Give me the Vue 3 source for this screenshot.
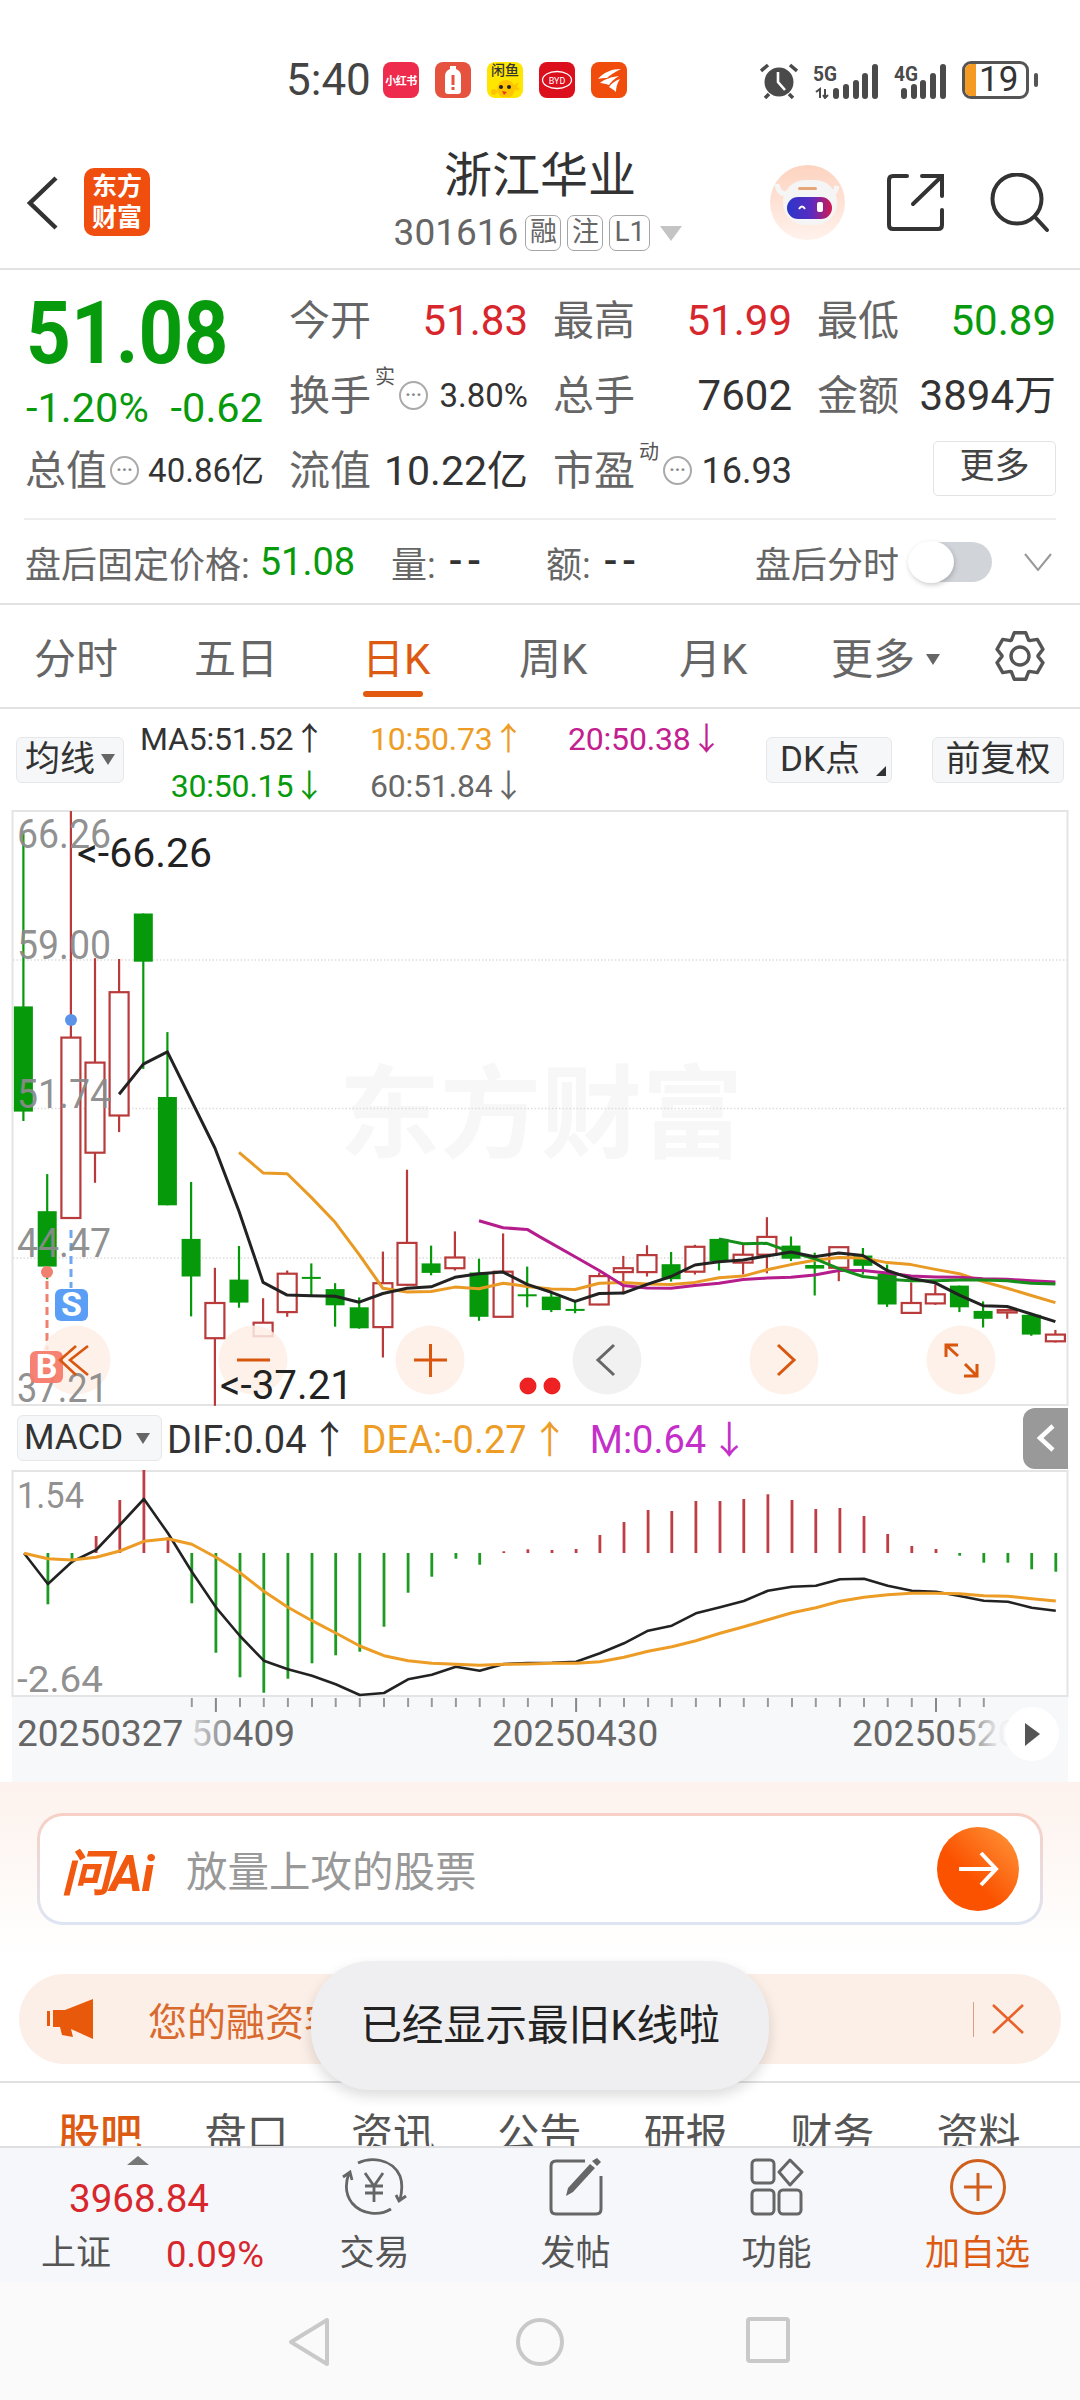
<template>
  <div class="page">
    <!-- status bar -->
    <div class="status">
      <span class="time">5:40</span>
      <div class="apps">
        <span class="app app-xhs">小红书</span>
        <span class="app app-bottle">
          <svg width="18" height="28" viewBox="0 0 18 28"><path d="M6 0H12V3Q17 5 17 10V25Q17 28 14 28H4Q1 28 1 25V10Q1 5 6 3Z" fill="#fff"/><rect x="7.5" y="9" width="3" height="10" fill="#e5533f"/><rect x="7.5" y="21" width="3" height="3" fill="#e5533f"/></svg>
        </span>
        <span class="app app-fish">
          <span class="fish-name">闲鱼</span>
          <svg width="32" height="19" viewBox="0 0 32 19"><circle cx="17" cy="11" r="9" fill="#ffc400"/><circle cx="5" cy="14" r="3" fill="#ffc400"/><circle cx="12" cy="9" r="2" fill="#222"/><circle cx="20" cy="9" r="2" fill="#222"/><path d="M13 13L18 14 15 17Z" fill="#e5381a"/><path d="M25 7L30 4 28 9 31 11 27 13Z" fill="#ffc400"/></svg>
        </span>
        <span class="app app-byd">
          <svg width="32" height="20" viewBox="0 0 32 20"><ellipse cx="16" cy="10" rx="14.5" ry="8.5" stroke="#fff" stroke-width="1.3" fill="none"/><text x="16" y="13.5" class="byd">BYD</text></svg>
        </span>
        <span class="app app-em">
          <svg width="28" height="28" viewBox="0 0 28 28"><path d="M3 13C9 6 17 3 26 3 20 6 15 9 12 12 9 12 6 12 3 13ZM5 17C10 13 16 11 24 10 19 13 16 16 14 19 11 18 8 17 5 17ZM14 21C17 17 20 15 25 13 22 17 21 22 21 26 19 24 16 22 14 21Z" fill="#fff"/></svg>
        </span>
      </div>
      <div class="sys">
        <svg width="38" height="36" viewBox="0 0 38 36">
          <circle cx="19" cy="19" r="14.5" fill="#4a4a4a"/>
          <path d="M18 9V19L25 27" stroke="#fff" stroke-width="2.6" fill="none"/>
          <path d="M1 8L8 2M37 8L30 2M9 31L5 35M29 31L33 35" stroke="#4a4a4a" stroke-width="3.5" fill="none"/>
        </svg>
        <svg width="66" height="36" viewBox="0 0 66 36">
          <text x="0" y="18" class="net" textLength="24" lengthAdjust="spacingAndGlyphs">5G</text>
          <path d="M7 35V26L3 29M12 26V35M10 32L12 35 15 32" stroke="#4a4a4a" stroke-width="2" fill="none"/>
          <path d="M23 28V33M33 24V33M43 20V33M52 13V33M62 4V33" stroke="#4a4a4a" stroke-width="6" stroke-linecap="round"/>
        </svg>
        <svg width="53" height="36" viewBox="0 0 53 36">
          <text x="0" y="18" class="net" textLength="24" lengthAdjust="spacingAndGlyphs">4G</text>
          <path d="M10 28V33M20 24V33M29 20V33M39 13V33M49 4V33" stroke="#4a4a4a" stroke-width="6" stroke-linecap="round"/>
        </svg>
        <div class="battery"><span class="batt-body"><i></i><b>19</b></span><span class="batt-tip"></span></div>
      </div>
    </div>

    <!-- title bar -->
    <div class="titlebar">
      <div class="tb-left">
        <svg width="31" height="54" viewBox="0 0 31 54"><path d="M29 2L3 27 29 52" stroke="#333" stroke-width="4.5" fill="none"/></svg>
        <div class="logo">东方<br>财富</div>
      </div>
      <div class="tb-center">
        <div class="name">浙江华业</div>
        <div class="code-row">
          <span class="code">301616</span>
          <span class="tag">融</span>
          <span class="tag">注</span>
          <span class="tag tag-l">L1</span>
          <span class="code-tri"></span>
        </div>
      </div>
      <div class="tb-right">
        <svg width="75" height="75" viewBox="0 0 75 75">
          <defs>
            <linearGradient id="visor" x1="0" y1="0" x2="1" y2="0"><stop offset="0" stop-color="#2a36c9"/><stop offset="0.55" stop-color="#5b2bc0"/><stop offset="1" stop-color="#d11a50"/></linearGradient>
            <linearGradient id="halo" x1="0" y1="0" x2="0" y2="1"><stop offset="0" stop-color="#fdd3c0"/><stop offset="1" stop-color="#fff2ec"/></linearGradient>
          </defs>
          <circle cx="37.5" cy="37.5" r="37.5" fill="url(#halo)"/>
          <path d="M7 19C8 26 11 29 16 29M67 21C66 27 63 30 58 30" stroke="#f6f6f6" stroke-width="5" fill="none"/>
          <rect x="13" y="15" width="54" height="45" rx="22" fill="#f5f5f6"/>
          <rect x="17" y="32" width="45" height="22" rx="11" fill="url(#visor)"/>
          <path d="M29 44Q32 39 35 44" stroke="#fff" stroke-width="2" fill="none"/>
          <rect x="47" y="37" width="6" height="10" rx="2" fill="#fff"/>
          <rect x="28" y="22" width="19" height="3" rx="1.5" fill="#e5a777"/>
        </svg>
        <svg class="share" width="60" height="60" viewBox="0 0 60 60">
          <path d="M21 3H7Q3 3 3 7V52Q3 56 7 56H52Q56 56 56 52V37" stroke="#333" stroke-width="4" fill="none" stroke-linecap="round"/>
          <path d="M27 31L55 4M36 3H56V23" stroke="#333" stroke-width="4" fill="none" stroke-linecap="round"/>
        </svg>
        <svg width="60" height="60" viewBox="0 0 60 60">
          <circle cx="27" cy="26" r="24.5" stroke="#333" stroke-width="4" fill="none"/>
          <path d="M45 44L57 57" stroke="#333" stroke-width="4" stroke-linecap="round"/>
        </svg>
      </div>
    </div>

    <!-- quote -->
    <div class="quote">
      <div class="price-block">
        <div class="price"><span>51.08</span></div>
        <div class="change"><span>-1.20%</span><span>-0.62</span></div>
      </div>
      <div class="cell"><span class="lab">今开</span><span class="val up">51.83</span></div>
      <div class="cell"><span class="lab">最高</span><span class="val up">51.99</span></div>
      <div class="cell"><span class="lab">最低</span><span class="val down">50.89</span></div>
      <div class="cell">
        <span class="lab-group"><span class="lab">换手</span><sup class="sup">实</sup><span class="dots">···</span></span>
        <span class="val v33">3.80%</span>
      </div>
      <div class="cell"><span class="lab">总手</span><span class="val">7602</span></div>
      <div class="cell"><span class="lab">金额</span><span class="val">3894万</span></div>
      <div class="cell">
        <span class="lab-group"><span class="lab">总值</span><span class="dots d-after">···</span></span>
        <span class="val v33">40.86亿</span>
      </div>
      <div class="cell"><span class="lab">流值</span><span class="val v41">10.22亿</span></div>
      <div class="cell">
        <span class="lab-group"><span class="lab">市盈</span><sup class="sup">动</sup><span class="dots">···</span></span>
        <span class="val v36">16.93</span>
      </div>
      <div class="cell cell-more"><span class="more-btn">更多</span></div>
    </div>

    <!-- after hours -->
    <div class="after">
      <div class="af-a"><span>盘后固定价格:</span><b class="down">51.08</b></div>
      <div class="af-b"><span>量:</span><b>--</b></div>
      <div class="af-c"><span>额:</span><b>--</b></div>
      <span class="af-label">盘后分时</span>
      <span class="toggle"><i></i></span>
      <svg width="28" height="18" viewBox="0 0 28 18"><path d="M1 1L14 17 27 1" stroke="#999" stroke-width="2" fill="none"/></svg>
    </div>

    <!-- period tabs -->
    <div class="periods">
      <span>分时</span>
      <span>五日</span>
      <span class="active">日K</span>
      <span>周K</span>
      <span>月K</span>
      <span class="more-tab">更多<i></i></span>
      <svg width="52" height="52" viewBox="0 0 52 52"><path :d="gear" stroke="#555" stroke-width="3.4" fill="none" stroke-linejoin="round"/><circle cx="26" cy="26" r="9" stroke="#555" stroke-width="3.4" fill="none"/></svg>
    </div>

    <!-- moving averages -->
    <div class="ma-row">
      <span class="chip chip-ma">均线<i></i></span>
      <div class="ma-grid">
        <span>MA5:51.52<em>↑</em></span>
        <span class="c-orange">10:50.73<em>↑</em></span>
        <span class="c-pink">20:50.38<em>↓</em></span>
        <span class="down">30:50.15<em>↓</em></span>
        <span class="c-gray">60:51.84<em>↓</em></span>
      </div>
      <span class="chip chip-dk">DK点<i></i></span>
      <span class="chip chip-fq">前复权</span>
    </div>

    <!-- k line chart -->
    <svg class="chart kline" width="1080" height="596" viewBox="0 810 1080 596">
      <rect x="12.5" y="811" width="1055" height="594" fill="#fff" stroke="#e4e4e4" stroke-width="2"/>
      <text x="339" y="1150" class="wm">东方财富</text>
      <line v-for="y in [960, 1108.5, 1258]" :key="y" x1="13" x2="1067" :y1="y" :y2="y" stroke="#ddd" stroke-width="1.5" stroke-dasharray="1.5 2"/>
      <g v-for="c in candles" :key="c.x">
        <line :x1="c.x" :x2="c.x" :y1="c.top" :y2="c.bottom" :stroke="c.color" stroke-width="2.2"/>
        <rect :x="c.x - 9.5" :y="c.y" width="19" :height="c.h" :fill="c.up ? '#fff' : c.color" :stroke="c.up ? c.color : 'none'" :stroke-width="c.up ? 2.2 : 0"/>
      </g>
      <polyline v-for="l in maLines" :key="l.color" :points="l.points" :stroke="l.color" stroke-width="3" fill="none" stroke-linejoin="round"/>

      <circle cx="71" cy="1020" r="6" fill="#5b93e8"/>
      <line x1="71" x2="71" y1="1230" y2="1288" stroke="#6ea6f0" stroke-width="3" stroke-dasharray="8 5"/>
      <rect x="55" y="1289" width="33" height="32" rx="6" fill="#5a9ff5"/>
      <text x="71.5" y="1316" class="badge-text">S</text>
      <circle cx="47" cy="1272" r="6" fill="#f08070"/>
      <line x1="47" x2="47" y1="1281" y2="1350" stroke="#f08070" stroke-width="3" stroke-dasharray="8 5"/>

      <circle v-for="b in roundBtns" :key="b.x" :cx="b.x" cy="1360" r="34.5" :fill="b.fill" fill-opacity="0.85"/>

      <text v-for="t in priceLabels" :key="t.text" x="17" :y="t.y" class="axis-label" :textLength="t.w" lengthAdjust="spacingAndGlyphs">{{ t.text }}</text>
      <text x="77" y="867" class="mark" textLength="135" lengthAdjust="spacingAndGlyphs">&lt;-66.26</text>
      <text x="220" y="1399" class="mark" textLength="133" lengthAdjust="spacingAndGlyphs">&lt;-37.21</text>

      <rect x="30" y="1351" width="33" height="32" rx="6" fill="#f77b6b" fill-opacity="0.95"/>
      <text x="46.5" y="1378" class="badge-text">B</text>
      <path d="M88 1346L70 1360 88 1375M76 1346L60 1360 76 1375" stroke="#d9560f" stroke-width="2.6" fill="none"/>
      <path d="M237 1360H270" stroke="#d9560f" stroke-width="3" fill="none"/>
      <path d="M414 1360H447M430.5 1344V1377" stroke="#d9560f" stroke-width="3" fill="none"/>
      <path d="M614 1345L598 1360 614 1375" stroke="#666" stroke-width="3" fill="none"/>
      <path d="M778 1345L794 1360 778 1375" stroke="#d9560f" stroke-width="3" fill="none"/>
      <path d="M946 1345L958 1356M946 1357V1345H958M977 1376L965 1364M977 1364V1376H964" stroke="#d9560f" stroke-width="3" fill="none"/>
      <circle cx="528" cy="1386" r="8.5" fill="#ee2222"/>
      <circle cx="552" cy="1386" r="8.5" fill="#ee2222"/>
    </svg>

    <!-- macd legend -->
    <div class="macd-row">
      <span class="chip chip-macd">MACD<i></i></span>
      <span class="macd-v">DIF:0.04<em>↑</em></span>
      <span class="macd-v mv-dea c-orange">DEA:-0.27<em>↑</em></span>
      <span class="macd-v c-violet">M:0.64<em>↓</em></span>
      <span class="side-btn">
        <svg width="20" height="30" viewBox="0 0 20 30"><path d="M17 3L4 15 17 27" stroke="#fff" stroke-width="4.5" fill="none"/></svg>
      </span>
    </div>

    <!-- macd chart and date axis -->
    <svg class="chart macd" width="1080" height="312" viewBox="0 1470 1080 312">
      <defs>
        <linearGradient id="fadeIn" gradientUnits="userSpaceOnUse" x1="188" x2="240" y1="0" y2="0"><stop offset="0" stop-color="#e4e4e6"/><stop offset="1" stop-color="#666"/></linearGradient>
        <linearGradient id="fadeOut" gradientUnits="userSpaceOnUse" x1="960" x2="1000" y1="0" y2="0"><stop offset="0" stop-color="#666"/><stop offset="1" stop-color="#f0f0f2"/></linearGradient>
      </defs>
      <rect x="12" y="1697" width="1056" height="85" fill="#f7f8fa"/>
      <rect x="12.5" y="1471" width="1055" height="225" fill="#fff" stroke="#e4e4e4" stroke-width="2"/>
      <line v-for="b in macdBars" :key="b.x" :x1="b.x" :x2="b.x" :y1="1553" :y2="b.y" :stroke="b.color" stroke-width="2.8"/>
      <polyline :points="difLine" stroke="#222" stroke-width="2.6" fill="none" stroke-linejoin="round"/>
      <polyline :points="deaLine" stroke="#ed9d25" stroke-width="3" fill="none" stroke-linejoin="round"/>
      <text x="17" y="1508" class="axis-label small" textLength="67" lengthAdjust="spacingAndGlyphs">1.54</text>
      <text x="17" y="1692" class="axis-label small" textLength="86" lengthAdjust="spacingAndGlyphs">-2.64</text>
      <line v-for="t in ticks" :key="t.x" :x1="t.x" :x2="t.x" y1="1698" :y2="t.long ? 1712 : 1707" :stroke="t.long ? '#888' : '#999'" stroke-width="2"/>
      <text x="17" y="1746" class="date">20250327</text>
      <text x="191" y="1746" class="date date-in">50409</text>
      <text x="492" y="1746" class="date">20250430</text>
      <text x="852" y="1746" class="date date-out">20250520</text>
      <circle cx="1032" cy="1734" r="27" fill="#fff"/>
      <path d="M1025 1723L1040 1734 1025 1746Z" fill="#555"/>
    </svg>

    <!-- ask ai -->
    <div class="ai-wrap">
      <div class="ai-box">
        <span class="ai-logo">问Ai</span>
        <span class="ai-hint">放量上攻的股票</span>
        <span class="ai-go">
          <svg width="42" height="42" viewBox="0 0 42 42"><path d="M2 21H38M24 5L39 21 24 37" stroke="#fff" stroke-width="4" fill="none"/></svg>
        </span>
      </div>
    </div>

    <!-- notice -->
    <div class="notice">
      <svg width="46" height="40" viewBox="0 0 46 40"><path d="M0 12H3V27H0ZM6 11H18L46 0V40L24 30 26 38 15 36 13 28H6Z" fill="#e8590c"/></svg>
      <span class="notice-text">您的融资客</span>
      <span class="notice-sep"></span>
      <svg width="32" height="30" viewBox="0 0 32 30"><path d="M1 1L31 29M31 1L1 29" stroke="#e8622a" stroke-width="2.6"/></svg>
    </div>

    <!-- info tabs, cut by the bottom bar -->
    <div class="info-tabs">
      <span class="on">股吧</span><span>盘口</span><span>资讯</span><span>公告</span><span>研报</span><span>财务</span><span>资料</span>
    </div>

    <!-- bottom bar -->
    <div class="bottom">
      <div class="index">
        <i class="idx-tri"></i>
        <div class="idx-value">3968.84</div>
        <div class="idx-line"><span>上证</span><b>0.09%</b></div>
      </div>
      <div class="act">
        <svg width="66" height="60" viewBox="0 0 66 60">
          <path d="M16 5C28 -1 50 0 58 18 61 26 60 34 58 42M54 37L57 43 64 38" stroke="#666" stroke-width="2.8" fill="none"/>
          <path d="M49 51C38 58 20 57 10 45 3 36 3 26 7 15M1 19L8 14 10 22" stroke="#666" stroke-width="2.8" fill="none"/>
          <path d="M23 15L32 28 41 15M32 28V44M23 28H41M23 35H41" stroke="#666" stroke-width="2.8" fill="none"/>
        </svg>
        <span>交易</span>
      </div>
      <div class="act">
        <svg width="56" height="60" viewBox="0 0 56 60">
          <path d="M37 3H8Q3 3 3 8V51Q3 56 8 56H48Q53 56 53 51V18" stroke="#666" stroke-width="3" fill="none"/>
          <path d="M18 38L20 30 42 6 47 10 25 34Z" fill="#666"/>
          <path d="M44 3L49 0 53 4 49 8Z" fill="#666"/>
        </svg>
        <span>发帖</span>
      </div>
      <div class="act">
        <svg width="54" height="60" viewBox="0 0 54 60">
          <rect x="2" y="2" width="22" height="23" rx="4" stroke="#666" stroke-width="3" fill="none"/>
          <path d="M40 2L52 14 40 27 29 14Z" stroke="#666" stroke-width="3" fill="none" stroke-linejoin="round"/>
          <rect x="2" y="32" width="22" height="24" rx="4" stroke="#666" stroke-width="3" fill="none"/>
          <rect x="29" y="32" width="22" height="24" rx="4" stroke="#666" stroke-width="3" fill="none"/>
        </svg>
        <span>功能</span>
      </div>
      <div class="act act-on">
        <svg width="56" height="60" viewBox="0 0 56 60">
          <circle cx="28" cy="29" r="26.5" stroke="#cf5f1c" stroke-width="3" fill="none"/>
          <path d="M14 29H42M28 15V43" stroke="#cf5f1c" stroke-width="3" fill="none"/>
        </svg>
        <span>加自选</span>
      </div>
    </div>

    <!-- system nav -->
    <div class="nav">
      <svg width="42" height="50" viewBox="0 0 42 50"><path d="M39 3V47L3 25Z" stroke="#c9c9c9" stroke-width="4" fill="none" stroke-linejoin="round"/></svg>
      <svg width="48" height="50" viewBox="0 0 48 50"><circle cx="24" cy="25" r="22" stroke="#c9c9c9" stroke-width="4" fill="none"/></svg>
      <svg width="44" height="46" viewBox="0 0 44 46"><rect x="2" y="2" width="40" height="42" rx="2" stroke="#c9c9c9" stroke-width="4" fill="none"/></svg>
    </div>

    <!-- toast -->
    <div class="toast">已经显示最旧K线啦</div>
  </div>
</template>

<script setup>
// coordinates below were read off crops, zx/zy are crop units
const X = (zx) => +(zx / 2.904).toFixed(1)
const Y = (zy) => +(zy / 2.529 + 800).toFixed(1)
const R = 1568 // right half crop starts here

const GREEN = '#069a0b'
const RED = '#b93a3a'

// x, wick top, wick bottom, body top, body bottom, up
const rawCandles = [
  [68, 85, 812, 522, 788, 0],
  [137, 946, 1212, 1040, 1180, 0],
  [206, 28, 600, 601, 1057, 1],
  [276, 400, 968, 664, 892, 1],
  [346, 402, 840, 486, 798, 1],
  [416, 287, 680, 287, 409, 0],
  [486, 587, 1025, 751, 1025, 0],
  [555, 966, 1306, 1110, 1205, 0],
  [624, 1183, 1532, 1272, 1361, 1],
  [694, 1128, 1284, 1213, 1271, 0],
  [764, 1260, 1358, 1322, 1356, 1],
  [834, 1190, 1307, 1198, 1295, 1],
  [904, 1172, 1255, 1206, 1211, 0],
  [973, 1222, 1332, 1237, 1278, 0],
  [1043, 1258, 1337, 1283, 1336, 0],
  [1112, 1142, 1410, 1222, 1333, 1],
  [1182, 935, 1228, 1120, 1226, 1],
  [1252, 1127, 1202, 1172, 1196, 0],
  [1321, 1091, 1190, 1157, 1184, 1],
  [1391, 1160, 1317, 1195, 1307, 0],
  [1461, 1096, 1308, 1193, 1307, 1],
  [1531, 1180, 1283, 1250, 1255, 0],
  [R + 33, 1245, 1295, 1256, 1290, 0],
  [R + 102, 1268, 1298, 1287, 1291, 0],
  [R + 172, 1195, 1278, 1204, 1276, 1],
  [R + 242, 1153, 1250, 1184, 1194, 1],
  [R + 311, 1126, 1205, 1151, 1194, 1],
  [R + 381, 1143, 1218, 1174, 1212, 0],
  [R + 450, 1125, 1200, 1130, 1193, 1],
  [R + 520, 1110, 1190, 1110, 1167, 0],
  [R + 590, 1125, 1200, 1150, 1170, 1],
  [R + 659, 1055, 1197, 1105, 1150, 1],
  [R + 729, 1104, 1166, 1127, 1160, 0],
  [R + 798, 1145, 1253, 1176, 1185, 0],
  [R + 868, 1130, 1217, 1131, 1183, 1],
  [R + 938, 1133, 1200, 1152, 1178, 0],
  [R + 1008, 1175, 1282, 1198, 1276, 0],
  [R + 1078, 1220, 1297, 1272, 1297, 1],
  [R + 1148, 1225, 1277, 1250, 1273, 1],
  [R + 1218, 1228, 1295, 1228, 1283, 0],
  [R + 1287, 1268, 1334, 1292, 1312, 0],
  [R + 1357, 1287, 1312, 1290, 1296, 1],
  [R + 1427, 1300, 1355, 1302, 1352, 0],
  [R + 1497, 1340, 1372, 1352, 1369, 1]
]

const candles = rawCandles.map(([x, t, b, bt, bb, up]) => ({
  x: X(x),
  top: Y(t),
  bottom: Y(b),
  y: Y(bt),
  h: Math.max(+(Y(bb) - Y(bt)).toFixed(1), 2),
  up: !!up,
  color: up ? RED : GREEN
}))

const toPoints = (list, fy) => list.map(([x, y]) => `${X(x)},${fy(y)}`).join(' ')

const maLines = [
  {
    color: '#e99a24',
    points: toPoints([[694,891],[764,943],[834,945],[904,1005],[973,1068],[1043,1150],[1112,1235],[1182,1244],[1252,1243],[1321,1232],[1391,1236],[1461,1222],[1531,1230],[R+33,1237],[R+102,1238],[R+172,1222],[R+242,1220],[R+311,1224],[R+381,1225],[R+450,1220],[R+520,1208],[R+590,1204],[R+659,1188],[R+729,1175],[R+798,1164],[R+868,1157],[R+938,1158],[R+1008,1170],[R+1078,1175],[R+1148,1187],[R+1218,1198],[R+1287,1218],[R+1357,1235],[R+1427,1253],[R+1497,1271]], Y)
  },
  {
    color: '#b51d8c',
    points: toPoints([[1391,1064],[1461,1082],[1531,1086],[R,1105],[R+102,1155],[R+172,1190],[R+242,1228],[R+311,1234],[R+381,1235],[R+450,1228],[R+520,1222],[R+590,1213],[R+659,1209],[R+729,1207],[R+798,1201],[R+868,1190],[R+938,1190],[R+1008,1196],[R+1078,1204],[R+1148,1206],[R+1218,1207],[R+1287,1211],[R+1357,1212],[R+1427,1216],[R+1497,1219]], Y)
  },
  {
    color: '#158f1a',
    points: toPoints([[R+520,1110],[R+590,1122],[R+659,1121],[R+729,1143],[R+798,1160],[R+868,1185],[R+938,1205],[R+1008,1212],[R+1078,1216],[R+1148,1216],[R+1218,1214],[R+1287,1214],[R+1357,1216],[R+1427,1222],[R+1497,1224]], Y)
  },
  {
    color: '#222',
    points: toPoints([[346,744],[416,668],[486,637],[624,880],[694,1040],[764,1220],[834,1252],[904,1254],[973,1255],[1043,1270],[1112,1248],[1182,1235],[1252,1231],[1321,1207],[1391,1198],[1461,1194],[1531,1225],[R+33,1245],[R+102,1268],[R+172,1248],[R+242,1247],[R+311,1225],[R+381,1205],[R+450,1176],[R+520,1168],[R+590,1163],[R+659,1153],[R+729,1143],[R+798,1155],[R+868,1146],[R+938,1152],[R+1008,1190],[R+1078,1210],[R+1148,1221],[R+1218,1252],[R+1287,1279],[R+1357,1281],[R+1427,1300],[R+1497,1319]], Y)
  }
]

const priceLabels = [
  { text: '66.26', y: 848, w: 94 },
  { text: '59.00', y: 959, w: 94 },
  { text: '51.74', y: 1108, w: 94 },
  { text: '44.47', y: 1257, w: 94 },
  { text: '37.21', y: 1402, w: 91 }
]

const roundBtns = [
  { x: 76, fill: '#fdeee5' },
  { x: 253, fill: '#fdeee5' },
  { x: 430, fill: '#fdeee5' },
  { x: 607, fill: '#efefef' },
  { x: 784, fill: '#fdeee5' },
  { x: 961, fill: '#fdeee5' }
]

// macd crops are 3x on the vertical axis
const MY = (zy) => +(zy / 3 + 1400).toFixed(1)

const rawBars = [
  [139,613],[209,490],[279,408],[348,300],[418,210],[488,412],[557,610],[627,758],[697,832],[766,878],[836,836],[906,790],[975,766],[1045,755],[1115,680],[1185,578],[1254,530],[1324,476],[1393,494],[1463,454],[1533,448],
  [R+35,450],[R+105,447],[R+174,405],[R+244,366],[R+314,330],[R+383,333],[R+453,303],[R+523,303],[R+592,297],[R+662,283],[R+732,300],[R+801,327],[R+871,324],[R+941,348],[R+1010,402],[R+1080,438],[R+1150,447],[R+1219,467],[R+1289,488],[R+1359,488],[R+1428,508],[R+1498,515]
]

const macdBars = rawBars.map(([x, y]) => ({
  x: X(x),
  y: MY(y),
  color: y > 460 ? '#1d9a22' : '#bf3e45'
}))

const difLine = toPoints([[70,460],[139,552],[209,485],[279,450],[348,375],[418,297],[488,400],[557,515],[627,622],[697,708],[766,782],[836,808],[906,827],[975,853],[1045,885],[1115,879],[1185,838],[1254,824],[1324,800],[1393,812],[1463,792],[1533,789],[R+35,788],[R+105,785],[R+174,760],[R+244,730],[R+314,692],[R+383,677],[R+453,640],[R+523,622],[R+592,603],[R+662,572],[R+732,560],[R+801,557],[R+871,538],[R+941,536],[R+1010,557],[R+1080,572],[R+1150,575],[R+1219,588],[R+1289,602],[R+1359,605],[R+1428,623],[R+1498,632]], MY)

const deaLine = toPoints([[70,460],[139,476],[209,480],[279,472],[348,453],[418,424],[488,416],[557,433],[627,472],[697,518],[766,574],[836,622],[906,662],[975,699],[1045,738],[1115,767],[1185,782],[1254,790],[1324,793],[1393,796],[1463,793],[1533,792],[R+35,790],[R+105,790],[R+174,785],[R+244,772],[R+314,754],[R+383,740],[R+453,722],[R+523,700],[R+592,680],[R+662,659],[R+732,638],[R+801,623],[R+871,604],[R+941,592],[R+1010,584],[R+1080,580],[R+1150,580],[R+1219,581],[R+1289,587],[R+1359,589],[R+1428,596],[R+1498,603]], MY)

const ticks = rawBars
  .filter(([x]) => x >= 557 && x <= R + 1289)
  .map(([x]) => ({ x: X(x), long: x === 627 || x === R + 105 || x === R + 1150 }))

// six toothed gear outline
const gearOutline = () => {
  const pts = []
  for (let i = 0; i < 6; i++) {
    const a = (i * Math.PI) / 3 - Math.PI / 2
    for (const [da, r] of [[-0.5, 18], [-0.24, 24], [0.24, 24], [0.5, 18]]) {
      pts.push(`${(26 + r * Math.cos(a + da)).toFixed(1)} ${(26 + r * Math.sin(a + da)).toFixed(1)}`)
    }
  }
  return `M${pts.join('L')}Z`
}
const gear = gearOutline()
</script>

<style>
body { background: #fff; }
</style>

<style scoped>
.page {
  width: 1080px;
  height: 2400px;
  overflow: hidden;
  position: relative;
  background: #fff;
  color: #333;
  font-family: Roboto, "Noto Sans CJK SC", sans-serif;
}
.up { color: #d7262c; }
.down { color: #079a0c; }
.c-orange { color: #ed9d25; }
.c-pink { color: #c2208f; }
.c-gray { color: #666; }
.c-violet { color: #c42fc9; }

/* status */
.status {
  height: 130px;
  display: flex;
  align-items: flex-start;
  padding: 62px 42px 0 286px;
  box-sizing: border-box;
}
.time { font-size: 44px; line-height: 36px; color: #444; width: 82px; }
.apps { display: flex; gap: 16px; margin-left: 15px; }
.app {
  width: 36px;
  height: 36px;
  border-radius: 8px;
  display: flex;
  align-items: center;
  justify-content: center;
  color: #fff;
  overflow: hidden;
}
.app-xhs { background: #ee2b4c; font-size: 11px; font-weight: 700; white-space: nowrap; letter-spacing: -0.5px; }
.app-bottle { background: #e5533f; }
.app-fish { background: #ffe600; color: #333; flex-direction: column; justify-content: flex-start; }
.fish-name { font-size: 14px; line-height: 16px; font-weight: 500; white-space: nowrap; }
.app-byd { background: #dc0f1c; }
.byd { font-size: 9px; fill: #fff; text-anchor: middle; }
.app-em { background: #f04c0c; }
.sys { display: flex; align-items: center; margin-left: auto; }
.sys svg:nth-child(2) { margin-left: 15px; }
.sys svg:nth-child(3) { margin-left: 15px; }
.net { font-size: 21px; font-weight: 700; fill: #4a4a4a; }
.battery { display: flex; align-items: center; margin-left: 15px; margin-top: -1px; }
.batt-body {
  width: 67px;
  height: 38px;
  border: 3px solid #555;
  border-radius: 9px;
  box-sizing: border-box;
  display: flex;
  align-items: center;
}
.batt-body i { width: 11px; height: 100%; background: #f59a23; display: block; border-radius: 6px 0 0 6px; }
.batt-body b { font-weight: 400; font-size: 35px; color: #333; margin-left: 3px; line-height: 32px; }
.batt-tip { width: 4px; height: 14px; background: #555; margin-left: 5px; border-radius: 2px; }

/* title */
.titlebar {
  height: 140px;
  display: grid;
  grid-template-columns: 1fr auto 1fr;
  border-bottom: 2px solid #e2e2e2;
  box-sizing: border-box;
}
.tb-left { display: flex; align-items: flex-start; padding: 46px 0 0 27px; }
.tb-left svg { flex: none; }
.logo {
  width: 66px;
  height: 68px;
  margin: -8px 0 0 26px;
  background: #f04e0e;
  border-radius: 10px;
  color: #fff;
  font-size: 25px;
  font-weight: 700;
  line-height: 31px;
  text-align: center;
  padding-top: 3px;
  box-sizing: border-box;
}
.tb-center { display: flex; flex-direction: column; align-items: center; padding-top: 19px; }
.name { font-size: 48px; line-height: 54px; color: #333; }
.code-row { display: flex; align-items: center; margin-top: 12px; height: 36px; margin-left: -4px; }
.code { font-size: 37px; color: #666; line-height: 36px; margin-right: 7px; }
.tag {
  width: 36px;
  height: 36px;
  border: 1.5px solid #a5a5a5;
  border-radius: 7px;
  box-sizing: border-box;
  margin-right: 6px;
  font-size: 27px;
  line-height: 32px;
  text-align: center;
  color: #666;
}
.tag-l { width: 41px; font-size: 28px; }
.code-tri {
  margin-left: 4px;
  border-left: 11px solid transparent;
  border-right: 11px solid transparent;
  border-top: 15px solid #c4c4c4;
}
.tb-right { display: flex; justify-content: flex-end; align-items: flex-start; padding: 35px 30px 0 0; }
.share { margin: 8px 44px 0 41px; flex: none; }
.tb-right svg { flex: none; }
.tb-right svg:last-child { margin-top: 8px; }

/* quote */
.quote {
  height: 250px;
  box-sizing: border-box;
  padding: 13px 24px 0 26px;
  display: grid;
  grid-template-columns: repeat(4, 238px);
  grid-template-rows: repeat(3, 75px);
  column-gap: 26px;
  position: relative;
}
.quote::after {
  content: "";
  position: absolute;
  left: 24px;
  right: 24px;
  bottom: 0;
  height: 2px;
  background: #eee;
}
.price-block { grid-column: 1; grid-row: 1 / 3; display: flex; flex-direction: column; width: 250px; }
.price { font-size: 88px; line-height: 75px; margin-top: 12px; font-weight: 700; color: #079a0c; }
.price span { display: inline-block; transform: scaleX(0.89); transform-origin: left center; }
.change {
  font-size: 41.5px;
  line-height: 75px;
  color: #079a0c;
  display: flex;
  justify-content: space-between;
  width: 237px;
}
.cell { display: flex; justify-content: space-between; align-items: center; }
.lab { font-size: 41px; color: #666; line-height: 48px; margin-left: -1px; }
.val { font-size: 42px; color: #333; line-height: 48px; }
.val.up { color: #d7262c; }
.val.down { color: #079a0c; }
.v33 { font-size: 33px; }
.v36 { font-size: 36px; }
.v41 { font-size: 41px; }
.lab-group { display: flex; align-items: center; height: 75px; }
.sup {
  font-size: 20px;
  line-height: 20px;
  color: #555;
  align-self: flex-start;
  margin: 9px 0 0 4px;
  vertical-align: baseline;
}
.dots {
  width: 29px;
  height: 29px;
  border: 2px solid #aaa;
  border-radius: 50%;
  box-sizing: border-box;
  margin-left: 4px;
  font-size: 18px;
  font-weight: 700;
  line-height: 24px;
  text-align: center;
  color: #888;
}
.d-after { margin-left: 3px; }
.cell-more { justify-content: flex-end; align-items: flex-start; }
.more-btn {
  width: 123px;
  height: 55px;
  margin-top: 8px;
  border: 1.5px solid #e3e3e3;
  border-radius: 5px;
  box-sizing: border-box;
  font-size: 35px;
  line-height: 50px;
  text-align: center;
  color: #444;
}

/* after hours */
.after {
  height: 85px;
  display: flex;
  align-items: center;
  padding-left: 25px;
  box-sizing: border-box;
  border-bottom: 2px solid #e2e2e2;
  font-size: 36px;
  color: #666;
}
.after b { font-weight: 400; }
.af-a { width: 366px; display: flex; align-items: center; }
.af-a b { font-size: 38px; margin-left: 10px; }
.af-b { width: 155px; display: flex; align-items: center; }
.af-c { width: 209px; display: flex; align-items: center; }
.af-b b, .af-c b { margin-left: 13px; color: #333; font-size: 40px; letter-spacing: 5px; font-weight: 500; }
.af-label { width: 153px; }
.toggle {
  width: 84px;
  height: 40px;
  position: relative;
  display: block;
  margin-right: 32px;
}
.toggle::before {
  content: "";
  position: absolute;
  left: 12px;
  right: 0;
  top: 0;
  bottom: 0;
  background: #d1d5da;
  border-radius: 20px;
}
.toggle i {
  position: absolute;
  left: 0;
  top: -1px;
  width: 46px;
  height: 42px;
  border-radius: 50%;
  background: #fff;
  box-shadow: 1px 2px 5px rgba(0, 0, 0, 0.2);
}

/* periods */
.periods {
  height: 104px;
  padding-left: 34px;
  box-sizing: border-box;
  border-bottom: 2px solid #e2e2e2;
  display: grid;
  grid-template-columns: 160px 168px 157px 160px 152px 163px auto;
  align-items: center;
  font-size: 42px;
  color: #666;
}
.periods span { line-height: 56px; margin-top: 7px; }
.periods .active { color: #dd5a12; position: relative; }
.periods .active::after {
  content: "";
  position: absolute;
  left: 1px;
  top: 59px;
  width: 60px;
  height: 6px;
  border-radius: 3px;
  background: #e25a10;
}
.more-tab { display: flex; align-items: center; }
.more-tab i {
  margin-left: 11px;
  border-left: 7px solid transparent;
  border-right: 7px solid transparent;
  border-top: 11px solid #666;
}

/* ma row */
.ma-row {
  height: 101px;
  display: flex;
  align-items: center;
  padding-left: 16px;
}
.chip {
  height: 46px;
  box-sizing: border-box;
  background: #f6f7f9;
  border: 1.5px solid #e6e7ea;
  border-radius: 6px;
  font-size: 35px;
  line-height: 42px;
  color: #333;
  display: flex;
  align-items: center;
  justify-content: center;
  position: relative;
  flex: none;
}
.chip-ma { width: 108px; }
.chip-ma i, .chip-macd i {
  margin-left: 6px;
  border-left: 7px solid transparent;
  border-right: 7px solid transparent;
  border-top: 11px solid #666;
}
.chip-dk { width: 126px; margin-left: 50px; justify-content: flex-start; padding-left: 13px; }
.chip-dk i {
  position: absolute;
  right: 5px;
  bottom: 6px;
  border-left: 10px solid transparent;
  border-bottom: 10px solid #333;
}
.chip-fq { width: 132px; margin-left: 40px; }
.ma-grid {
  margin-left: 16px;
  width: 576px;
  display: grid;
  grid-template-columns: 178px 146px 147px;
  column-gap: 52px;
  grid-auto-rows: 47px;
  font-size: 32px;
  line-height: 47px;
  color: #333;
  letter-spacing: -0.2px;
}
.ma-grid span { text-align: right; white-space: nowrap; }
.ma-grid em, .macd-v em { font-style: normal; font-family: "Noto Sans CJK SC", sans-serif; }
.ma-grid em { font-size: 32px; margin-right: -7px; }

/* charts */
.chart { display: block; }
.wm { font-size: 101px; font-weight: 700; fill: #f7f7f7; }
.axis-label { font-size: 40px; fill: #8a8a8a; fill-opacity: 0.95; }
.axis-label.small { font-size: 36px; }
.mark { font-size: 41px; fill: #222; }
.badge-text { font-size: 34px; font-weight: 700; fill: #fff; text-anchor: middle; }
.date { font-size: 37px; fill: #666; }
.date-in { fill: url(#fadeIn); }
.date-out { fill: url(#fadeOut); }

/* macd row */
.macd-row {
  height: 64px;
  display: flex;
  align-items: center;
  padding: 0 12px 0 17px;
  box-sizing: border-box;
}
.chip-macd { width: 145px; height: 46px; justify-content: flex-start; padding-left: 6px; margin-right: 5px; }
.chip-macd i { margin-left: 13px; }
.macd-v { font-size: 38px; line-height: 50px; color: #333; margin-right: 21px; white-space: nowrap; }
.mv-dea { margin-right: 29px; }
.macd-v.c-orange { color: #ed9d25; }
.macd-v.c-violet { color: #c42fc9; }
.macd-v em { font-size: 38px; margin-left: 4px; margin-right: -8px; }
.side-btn {
  margin-left: auto;
  width: 45px;
  height: 61px;
  background: #999;
  border-radius: 12px 0 0 12px;
  display: flex;
  align-items: center;
  justify-content: center;
}

/* ai */
.ai-wrap {
  height: 192px;
  padding: 31px 37px 0;
  box-sizing: border-box;
  background: linear-gradient(#fdf2ed, #fff 90%);
}
.ai-box {
  height: 112px;
  box-sizing: border-box;
  border: 3px solid transparent;
  border-radius: 26px;
  background: linear-gradient(#fff, #fff) padding-box, linear-gradient(#f8cfc4, #dde5f3) border-box;
  display: flex;
  align-items: center;
  padding: 0 21px 0 21px;
}
.ai-logo {
  font-size: 50px;
  font-weight: 700;
  font-style: italic;
  width: 125px;
  letter-spacing: -1px;
  color: #f0590f;
}
.ai-hint { font-size: 41.5px; color: #999; }
.ai-go {
  margin-left: auto;
  width: 82px;
  height: 84px;
  border-radius: 50%;
  background: linear-gradient(45deg, #fb5200 40%, #ff9a3e);
  display: flex;
  align-items: center;
  justify-content: center;
}

/* notice */
.notice {
  height: 90px;
  margin: 0 19px;
  border-radius: 45px;
  background: #fcefe7;
  display: flex;
  align-items: center;
  padding-left: 28px;
}
.notice-text { font-size: 39px; color: #d96a2e; margin-left: 55px; }
.notice-sep { margin-left: auto; width: 1.5px; height: 35px; background: #d9a080; }
.notice svg:last-child { margin: 0 37px 0 18px; }

/* tabs */
.info-tabs {
  height: 65px;
  margin-top: 17px;
  border-top: 2px solid #e0e0e0;
  box-sizing: border-box;
  overflow: hidden;
  display: grid;
  grid-template-columns: repeat(7, 146.4px);
  padding-left: 27px;
  padding-top: 27px;
  font-size: 42px;
  line-height: 50px;
  color: #555;
  text-align: center;
}
.info-tabs .on { color: #dd5a12; font-weight: 500; }

/* bottom */
.bottom {
  height: 136px;
  background: #f6f7fa;
  border-top: 2px solid #dfdfe2;
  box-sizing: border-box;
  display: grid;
  grid-template-columns: 274px repeat(4, 201px);
}
.index { position: relative; padding-left: 41px; }
.idx-tri {
  position: absolute;
  left: 127px;
  top: 8px;
  border-left: 11px solid transparent;
  border-right: 11px solid transparent;
  border-bottom: 9px solid #777;
}
.idx-value { font-size: 38.5px; line-height: 46px; color: #d7262c; padding: 28px 0 0 28px; }
.idx-line { display: flex; align-items: center; margin-top: 10px; }
.idx-line span { font-size: 35px; color: #555; line-height: 44px; }
.idx-line b { font-size: 36.5px; font-weight: 400; color: #d7262c; margin-left: 55px; }
.act {
  display: flex;
  flex-direction: column;
  align-items: center;
  font-size: 35px;
  color: #555;
  padding-top: 10px;
}
.act svg { height: 60px; }
.act span { margin-top: 14px; line-height: 44px; }
.act-on { color: #dd5a12; }

/* nav */
.nav {
  height: 118px;
  background: #fafafa;
  display: flex;
  gap: 186px;
  padding: 35px 0 0 288px;
  box-sizing: border-box;
}
.nav svg { flex: none; }
.nav svg:last-child { margin-left: -4px; }

/* toast */
.toast {
  position: absolute;
  left: 311px;
  top: 1961px;
  width: 458px;
  height: 129px;
  border-radius: 60px;
  background: #efeff1;
  box-shadow: 0 6px 14px rgba(0, 0, 0, 0.14);
  font-size: 41.7px;
  line-height: 129px;
  text-align: center;
  color: #222;
}
</style>
